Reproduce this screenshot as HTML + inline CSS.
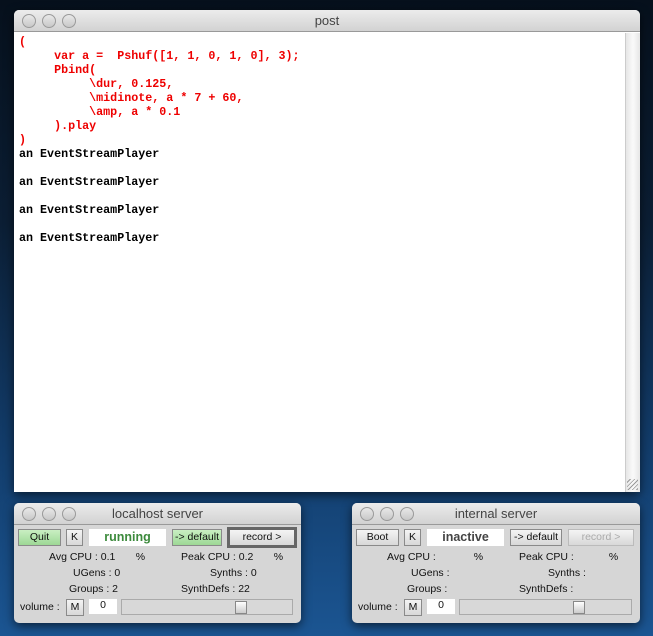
<!DOCTYPE html>
<html><head><style>
*{margin:0;padding:0;box-sizing:border-box}
body{width:653px;height:636px;overflow:hidden;position:relative;background:linear-gradient(180deg,#06101c 0%,#0b1e34 35%,#123c6a 70%,#1b5592 100%);font-family:"Liberation Sans",sans-serif}
.win{position:absolute;background:#e3e3e3;border-radius:5px 5px 0 0;box-shadow:0 3px 10px rgba(0,0,0,.6)}
.tb{position:absolute;left:0;right:0;top:0;height:22px;background:linear-gradient(#ececec,#d2d2d2);border-bottom:1px solid #999;border-radius:5px 5px 0 0;text-align:center;font-size:13px;line-height:22px;color:#444}
.dot{position:absolute;top:4px;width:14px;height:14px;border-radius:50%;background:linear-gradient(#e8e8e8,#c8c8c8);border:1px solid #9a9a9a}
.code{position:absolute;left:19px;top:35px;font-family:"Liberation Mono",monospace;font-weight:bold;font-size:11.7px;line-height:14px;white-space:pre;color:#000}
.r{color:#e00}
.sv{background:#d6d6d6;border-radius:5px;font-size:10.5px;color:#111}
.b{position:absolute;height:17px;border:1px solid #8a8a8a;background:linear-gradient(#f4f4f4,#d8d8d8);text-align:center;line-height:15px;font-size:10.5px}
.g{background:linear-gradient(#c9efc2,#9dd895)}
.l{position:absolute;font-size:10.5px;line-height:12px;white-space:pre}
.st{position:absolute;background:#fff;text-align:center;font-weight:bold;font-size:12.5px;line-height:17px;height:17px}
.sl{position:absolute;height:16px;border:1px solid #aaa;background:#d8d8d8}
.th{position:absolute;top:1px;width:12px;height:13px;background:linear-gradient(#fff,#ccc);border:1px solid #888}
</style></head><body>
<div class="win" style="left:14px;top:10px;width:626px;height:482px;background:#fff">
 <div class="tb">post</div>
 <div class="dot" style="left:8px"></div><div class="dot" style="left:28px"></div><div class="dot" style="left:48px"></div>
 <div style="position:absolute;right:0;top:23px;width:15px;bottom:0;background:linear-gradient(90deg,#e6e6e6,#fafafa,#e6e6e6);border-left:1px solid #ccc"></div>
 <div style="position:absolute;right:2px;bottom:2px;width:11px;height:11px;background:repeating-linear-gradient(135deg,transparent 0 2px,#999 2px 3px)"></div>
</div>
<div class="code"><span class="r">(
     var a =  Pshuf([1, 1, 0, 1, 0], 3);
     Pbind(
          \dur, 0.125,
          \midinote, a * 7 + 60,
          \amp, a * 0.1
     ).play
)</span>
an EventStreamPlayer

an EventStreamPlayer

an EventStreamPlayer

an EventStreamPlayer</div>

<div class="win sv" style="left:14px;top:503px;width:287px;height:120px">
 <div class="tb">localhost server</div>
 <div class="dot" style="left:8px"></div><div class="dot" style="left:28px"></div><div class="dot" style="left:48px"></div>
 <div class="b g" style="left:4px;top:26px;width:43px">Quit</div>
 <div class="b" style="left:52px;top:26px;width:17px">K</div>
 <div class="st" style="left:75px;top:26px;width:77px;color:#3c8a3c">running</div>
 <div class="b g" style="left:158px;top:26px;width:50px">-&gt; default</div>
 <div class="b" style="left:213px;top:24px;width:70px;height:21px;border:3px solid #666;line-height:15px">record &gt;</div>
 <div class="l" style="left:35px;top:48px">Avg CPU : 0.1       %</div>
 <div class="l" style="left:167px;top:48px">Peak CPU : 0.2       %</div>
 <div class="l" style="left:59px;top:64px">UGens : 0</div>
 <div class="l" style="left:196px;top:64px">Synths : 0</div>
 <div class="l" style="left:55px;top:80px">Groups : 2</div>
 <div class="l" style="left:167px;top:80px">SynthDefs : 22</div>
 <div class="l" style="left:6px;top:98px">volume :</div>
 <div class="b" style="left:52px;top:96px;width:18px">M</div>
 <div class="st" style="left:75px;top:96px;width:28px;font-weight:normal;font-size:10.5px;line-height:13px;height:15px">0</div>
 <div class="sl" style="left:107px;top:96px;width:172px"><div class="th" style="left:113px"></div></div>
</div>

<div class="win sv" style="left:352px;top:503px;width:288px;height:120px">
 <div class="tb">internal server</div>
 <div class="dot" style="left:8px"></div><div class="dot" style="left:28px"></div><div class="dot" style="left:48px"></div>
 <div class="b" style="left:4px;top:26px;width:43px">Boot</div>
 <div class="b" style="left:52px;top:26px;width:17px">K</div>
 <div class="st" style="left:75px;top:26px;width:77px;color:#444">inactive</div>
 <div class="b" style="left:158px;top:26px;width:52px">-&gt; default</div>
 <div class="b" style="left:216px;top:26px;width:66px;color:#aaa;border-color:#bbb">record &gt;</div>
 <div class="l" style="left:35px;top:48px">Avg CPU :             %</div>
 <div class="l" style="left:167px;top:48px">Peak CPU :            %</div>
 <div class="l" style="left:59px;top:64px">UGens :</div>
 <div class="l" style="left:196px;top:64px">Synths :</div>
 <div class="l" style="left:55px;top:80px">Groups :</div>
 <div class="l" style="left:167px;top:80px">SynthDefs :</div>
 <div class="l" style="left:6px;top:98px">volume :</div>
 <div class="b" style="left:52px;top:96px;width:18px">M</div>
 <div class="st" style="left:75px;top:96px;width:28px;font-weight:normal;font-size:10.5px;line-height:13px;height:15px">0</div>
 <div class="sl" style="left:107px;top:96px;width:173px"><div class="th" style="left:113px"></div></div>
</div>
</body></html>
